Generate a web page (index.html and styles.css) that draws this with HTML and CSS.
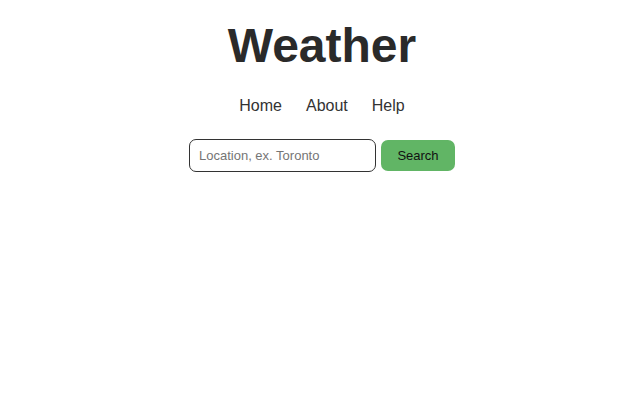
FILE: index.html
```html
<!DOCTYPE html>
<html>
<head>
<meta charset="utf-8">
<link rel="stylesheet" href="styles.css">
</head>
<body>
<header class="header">
  <h1 class="title">Weather</h1>
  <nav class="nav">
    <a class="nav-link" href="#">Home</a>
    <a class="nav-link" href="#">About</a>
    <a class="nav-link" href="#">Help</a>
  </nav>
</header>
<form class="search">
  <input class="search-input" type="text" placeholder="Location, ex. Toronto">
  <button class="search-button" type="button">Search</button>
</form>
</body>
</html>
```
FILE: styles.css
```css
body {
  margin: 0;
  padding-left: 4px;
  font-family: "Liberation Sans", Arial, sans-serif;
  color: #333;
  background: #fff;
}
.header {
  display: flex;
  flex-direction: column;
  align-items: center;
  padding-top: 18px;
}
.title {
  margin: 0;
  font-size: 48px;
  font-weight: bold;
  color: #2a2a2a;
  line-height: 55px;
}
.nav {
  display: flex;
  gap: 24px;
  margin-top: 24px;
}
.nav-link {
  font-size: 16px;
  color: #333;
  text-decoration: none;
  line-height: 18px;
}
.search {
  display: flex;
  justify-content: center;
  align-items: center;
  gap: 5px;
  margin-top: 24px;
}
.search-input {
  box-sizing: border-box;
  width: 187px;
  height: 33px;
  border: 1px solid #333;
  border-radius: 7px;
  padding: 0 9px;
  font-family: "Liberation Sans", Arial, sans-serif;
  font-size: 13px;
  color: #333;
}
.search-input::placeholder {
  color: #757575;
}
.search-button {
  box-sizing: border-box;
  width: 74px;
  height: 31px;
  border: none;
  border-radius: 7px;
  background: #61b565;
  color: #111;
  font-family: "Liberation Sans", Arial, sans-serif;
  font-size: 13px;
}
```
